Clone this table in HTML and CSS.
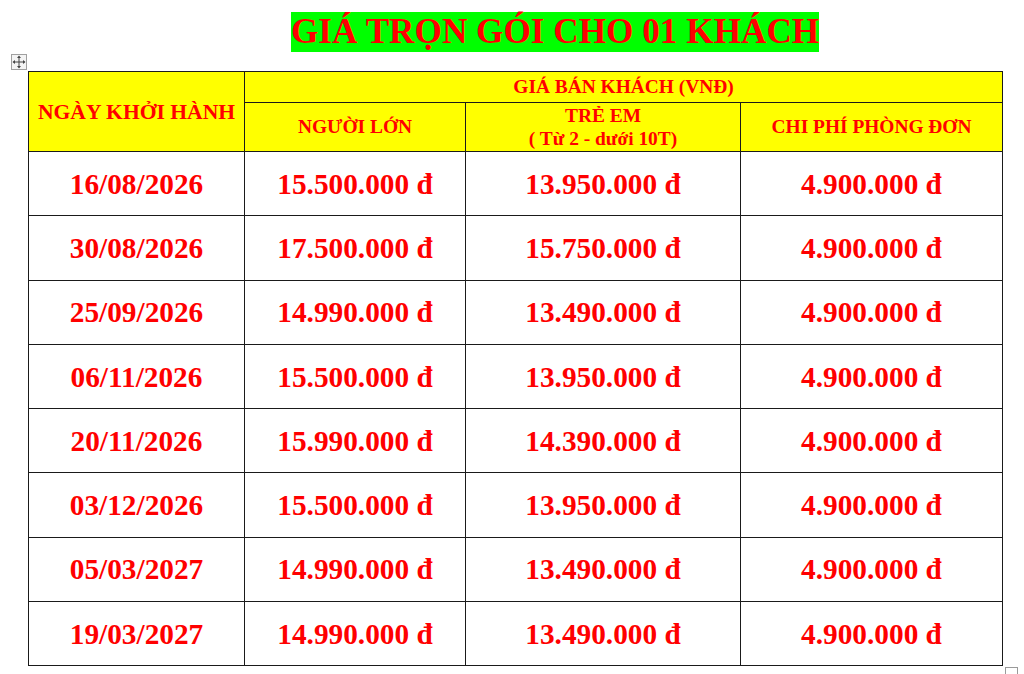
FILE: index.html
```html
<!DOCTYPE html>
<html lang="vi">
<head>
<meta charset="utf-8">
<title>Giá trọn gói</title>
<link rel="stylesheet" href="styles.css">
</head>
<body>
<div class="page">
  <div class="title-row">
    <h1 class="title">GIÁ TRỌN GÓI CHO 01 KHÁCH</h1>
  </div>
  <div class="table-wrap">
    <span class="move-handle">
      <svg width="14" height="14" viewBox="0 0 14 14">
        <g fill="none" stroke="#444" stroke-width="1">
          <line x1="7" y1="1.5" x2="7" y2="12.5"/>
          <line x1="1.5" y1="7" x2="12.5" y2="7"/>
        </g>
        <g fill="#444">
          <polygon points="7,0.5 5,3 9,3"/>
          <polygon points="7,13.5 5,11 9,11"/>
          <polygon points="0.5,7 3,5 3,9"/>
          <polygon points="13.5,7 11,5 11,9"/>
        </g>
      </svg>
    </span>
    <table class="price">
      <colgroup>
        <col class="c1"><col class="c2"><col class="c3"><col class="c4">
      </colgroup>
      <thead>
        <tr class="h1">
          <th rowspan="2" class="big">NGÀY KHỞI HÀNH</th>
          <th colspan="3" class="sub">GIÁ BÁN KHÁCH (VNĐ)</th>
        </tr>
        <tr class="h2">
          <th class="sub">NGƯỜI LỚN</th>
          <th class="sub two">TRẺ EM<br>( Từ 2 - dưới 10T)</th>
          <th class="sub">CHI PHÍ PHÒNG ĐƠN</th>
        </tr>
      </thead>
      <tbody>
        <tr><td>16/08/2026</td><td>15.500.000 đ</td><td>13.950.000 đ</td><td>4.900.000 đ</td></tr>
        <tr><td>30/08/2026</td><td>17.500.000 đ</td><td>15.750.000 đ</td><td>4.900.000 đ</td></tr>
        <tr><td>25/09/2026</td><td>14.990.000 đ</td><td>13.490.000 đ</td><td>4.900.000 đ</td></tr>
        <tr><td>06/11/2026</td><td>15.500.000 đ</td><td>13.950.000 đ</td><td>4.900.000 đ</td></tr>
        <tr><td>20/11/2026</td><td>15.990.000 đ</td><td>14.390.000 đ</td><td>4.900.000 đ</td></tr>
        <tr><td>03/12/2026</td><td>15.500.000 đ</td><td>13.950.000 đ</td><td>4.900.000 đ</td></tr>
        <tr><td>05/03/2027</td><td>14.990.000 đ</td><td>13.490.000 đ</td><td>4.900.000 đ</td></tr>
        <tr><td>19/03/2027</td><td>14.990.000 đ</td><td>13.490.000 đ</td><td>4.900.000 đ</td></tr>
      </tbody>
    </table>
    <span class="end-mark"></span>
  </div>
</div>
</body>
</html>
```
FILE: styles.css
```css
html, body {
  margin: 0;
  padding: 0;
  background: #ffffff;
}
.page {
  font-family: "Liberation Serif", "Times New Roman", serif;
  padding-top: 12px;
  width: 1024px;
  height: 674px;
  overflow: hidden;
  box-sizing: border-box;
}
.title-row {
  padding-left: 291px;
  height: 40px;
}
.title {
  display: inline-block;
  margin: 0;
  font-size: 35.2px;
  line-height: 40px;
  font-weight: bold;
  color: #ff0000;
  background: #00ff00;
  white-space: nowrap;
}
.table-wrap {
  position: relative;
  margin-top: 19px;
  padding-left: 28px;
}
.move-handle {
  position: absolute;
  left: 11px;
  top: -17px;
  width: 14px;
  height: 14px;
  border: 1px solid #a0a0a0;
  background: #f4f4f4;
  display: flex;
  align-items: center;
  justify-content: center;
}
.end-mark {
  position: absolute;
  left: 1005px;
  top: 596px;
  width: 11px;
  height: 11px;
  border: 1px solid #9a9a9a;
  background: #fff;
}
.price {
  border-collapse: collapse;
  table-layout: fixed;
  width: 974px;
}
.c1 { width: 216px; }
.c2 { width: 221px; }
.c3 { width: 275px; }
.c4 { width: 262px; }
.price th, .price td {
  border: 1px solid #1a1a1a;
  padding: 0;
  text-align: center;
  vertical-align: middle;
  font-weight: bold;
  color: #ff0000;
}
.price th {
  background: #ffff00;
}
.h1 { height: 31px; }
.h2 { height: 49px; }
.big {
  font-size: 21.6px;
  line-height: 24px;
  padding-bottom: 2px;
}
.sub {
  font-size: 19.4px;
  line-height: 22px;
}
.two { line-height: 23px; }
.price td {
  height: 63.3px;
  font-size: 29.3px;
  line-height: 32px;
}
```
